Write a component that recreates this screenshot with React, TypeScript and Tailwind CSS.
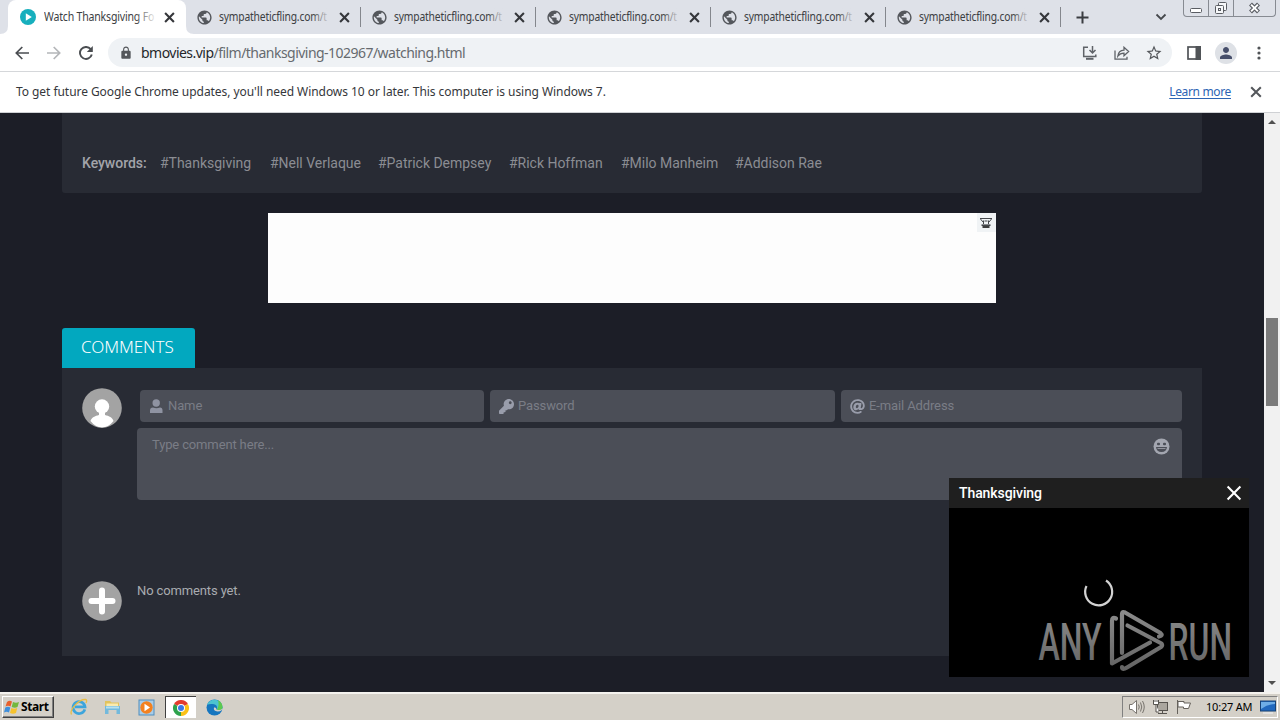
import React from "react";
import { FaKey, FaAt } from "react-icons/fa";
import { MdLock, MdStarBorder, MdPerson, MdPublic } from "react-icons/md";

const ui = "font-['Noto_Sans','DejaVu_Sans',sans-serif]";

function Cross({ size, color, width = 2 }: { size: number; color: string; width?: number }) {
  return (
    <svg width={size} height={size} viewBox="0 0 10 10" className="shrink-0">
      <path d="M1 1L9 9M9 1L1 9" stroke={color} strokeWidth={width} fill="none" />
    </svg>
  );
}

function SiteTab() {
  return (
    <div className="flex h-full w-[175px] shrink-0 items-center pl-[10px]">
      <MdPublic size={17} color="#54575c" className="shrink-0" />
      <div className="relative ml-[6px] w-[111px] whitespace-nowrap text-[12px] tracking-[-0.22px] text-[#3c4043]">
        <span className="block w-[111px] origin-left scale-x-[0.86]">sympatheticfling.com/t</span>
        <div className="absolute inset-y-0 right-0 w-[18px] bg-gradient-to-r from-transparent to-[#dee1e8]" />
      </div>
      <div className="ml-[9px] flex">
        <Cross size={11} color="#35373b" width={1.9} />
      </div>
      <div className="ml-auto h-[20px] w-px bg-[#84878d]" />
    </div>
  );
}

function TabStrip() {
  return (
    <div className="flex h-[34px] shrink-0 items-center bg-[#dee1e8] pl-[8px]">
      <div className="relative flex h-full w-[178px] shrink-0 items-center rounded-t-[8px] bg-white pl-[12px]">
        <svg width="8" height="8" viewBox="0 0 8 8" className="absolute -left-[8px] bottom-0">
          <path d="M8 0V8H0Q8 8 8 0Z" fill="#fff" />
        </svg>
        <svg width="8" height="8" viewBox="0 0 8 8" className="absolute -right-[8px] bottom-0">
          <path d="M0 0V8H8Q0 8 0 0Z" fill="#fff" />
        </svg>
        <svg width="16" height="16" viewBox="0 0 16 16" className="shrink-0">
          <circle cx="8" cy="8" r="8" fill="#17afbd" />
          <path d="M5.8 4.2L11.8 8L5.8 11.8Z" fill="#fff" />
        </svg>
        <div className="relative ml-[8px] w-[113px] whitespace-nowrap text-[12px] tracking-[-0.22px] text-[#3c4043]">
          <span className="block w-[113px] origin-left scale-x-[0.88]">Watch Thanksgiving Fo</span>
          <div className="absolute inset-y-0 right-0 w-[22px] bg-gradient-to-r from-transparent to-white" />
        </div>
        <div className="ml-[7px] flex">
          <Cross size={11} color="#35373b" width={1.9} />
        </div>
      </div>
      <SiteTab />
      <SiteTab />
      <SiteTab />
      <SiteTab />
      <SiteTab />
      <svg width="13" height="13" viewBox="0 0 13 13" className="ml-[15px] shrink-0">
        <path d="M6.5 0.5V12.5M0.5 6.5H12.5" stroke="#3a3d41" strokeWidth="2" />
      </svg>
      <svg width="12" height="8" viewBox="0 0 12 8" className="ml-[66px] shrink-0">
        <path d="M1.5 1.5L6 6L10.5 1.5" stroke="#45484c" strokeWidth="1.8" fill="none" />
      </svg>
      <div className="ml-[16px] flex h-[17px] w-[93px] shrink-0 self-start rounded-b-[4px] border border-t-0 border-[#878b92]">
        <div className="w-[25px] border-r border-[#878b92]">
          <svg width="24" height="16" viewBox="0 0 24 16">
            <rect x="6.5" y="8.500" width="11" height="4" rx="1" fill="#fff" stroke="#5a5d63" />
          </svg>
        </div>
        <div className="w-[25px] border-r border-[#878b92]">
          <svg width="24" height="16" viewBox="0 0 24 16" fill="#f6f7f9" stroke="#5a5d63">
            <rect x="9.500" y="2.500" width="8" height="8" rx="1" />
            <rect x="6.500" y="5.500" width="8" height="8" rx="1" />
            <rect x="9.500" y="8.500" width="2" height="2" />
          </svg>
        </div>
        <svg width="41" height="16" viewBox="0 0 41 16">
          <path d="M16.500 4L24.500 12M24.500 4L16.500 12" stroke="#5a5d63" strokeWidth="4.200" />
          <path d="M17.100 4.600L23.900 11.400M23.900 4.600L17.100 11.400" stroke="#fff" strokeWidth="2" />
        </svg>
      </div>
    </div>
  );
}

function Toolbar() {
  return (
    <div className="flex h-[38px] shrink-0 items-center border-b border-[#d5d7da] bg-white pl-[15px]">
      <svg width="14" height="14" viewBox="0 0 14 14">
        <path d="M14 7H1.500M7.300 1L1.300 7L7.300 13" stroke="#4a4d51" strokeWidth="1.700" fill="none" />
      </svg>
      <svg width="14" height="14" viewBox="0 0 14 14" className="ml-[18px]">
        <path d="M0 7H12.500M6.700 1L12.700 7L6.700 13" stroke="#b4b6b9" strokeWidth="1.700" fill="none" />
      </svg>
      <svg width="14" height="14" viewBox="0 0 14 14" className="ml-[18px]">
        <path d="M11.700 3.200A6 6 0 1 0 12.800 8.500" stroke="#4a4d51" strokeWidth="1.900" fill="none" />
        <path d="M13.800 0V6H7.800Z" fill="#4a4d51" />
      </svg>
      <div className="ml-[15px] flex h-[29px] w-[1064px] items-center rounded-full bg-[#eff2f5] pl-[11px] pr-[9px]">
        <MdLock size={14} color="#54575b" className="shrink-0" />
        <div className="ml-[8px] whitespace-nowrap text-[14px] tracking-[-0.53px] text-[#666a6f]">
          <span className="text-[#25272a]">bmovies.vip</span>/film/thanksgiving-102967/watching.html
        </div>
        <div className="ml-auto flex items-center">
          <svg width="16" height="14" viewBox="0 0 16 14" fill="none" stroke="#5f6368" strokeWidth="1.500">
            <path d="M6 1.200H1.700V10.500H13.800V8.500" />
            <path d="M4 12.800H11.500" strokeWidth="2" />
            <path d="M10.500 0V6.500M7.500 4L10.500 7L13.500 4" />
          </svg>
          <svg width="16" height="14" viewBox="0 0 16 14" fill="none" stroke="#5f6368" strokeWidth="1.300" className="ml-[16px]">
            <path d="M1 4.500V13.200H13V10.800" />
            <path d="M3.800 10.200C4.200 6.400 6.500 4.200 10 4.100V1.300L14.600 5.600L10 9.700V7.200C7.300 7.200 5.300 8.200 3.800 10.200Z" />
          </svg>
          <MdStarBorder size={18} color="#54575b" className="ml-[15px]" />
        </div>
      </div>
      <svg width="14" height="14" viewBox="0 0 14 14" className="ml-[15px]">
        <rect x="1" y="1" width="12" height="12" fill="#fff" stroke="#505357" strokeWidth="1.700" />
        <rect x="8.500" y="0" width="5.500" height="14" fill="#505357" />
      </svg>
      <div className="ml-[14px] flex h-[22px] w-[22px] items-center justify-center rounded-full bg-[#dee1e6]">
        <MdPerson size={18} color="#474f6b" />
      </div>
      <svg width="4" height="14" viewBox="0 0 4 14" fill="#505357" className="ml-[20px]">
        <circle cx="2" cy="2" r="1.600" />
        <circle cx="2" cy="7" r="1.600" />
        <circle cx="2" cy="12" r="1.600" />
      </svg>
    </div>
  );
}

function InfoBar() {
  return (
    <div className="flex h-[41px] shrink-0 items-center whitespace-nowrap border-b border-[#cfd1d4] bg-white pl-[16px] pr-[18px] text-[12px] text-[#35373b]">
      <span className="tracking-[-0.055px]">
        To get future Google Chrome updates, you'll need Windows 10 or later. This computer is using Windows 7.
      </span>
      <span className="ml-auto tracking-[-0.35px] text-[#2d64b4] underline underline-offset-2">Learn more</span>
      <div className="ml-[19px] flex">
        <Cross size={12} color="#54575b" width={1.700} />
      </div>
    </div>
  );
}

const keywords: [string, string][] = [
  ["#Thanksgiving", "w-[110px]"],
  ["#Nell Verlaque", "w-[108px]"],
  ["#Patrick Dempsey", "w-[131px]"],
  ["#Rick Hoffman", "w-[112px]"],
  ["#Milo Manheim", "w-[114px]"],
  ["#Addison Rae", "w-[110px]"],
];

function Field({ icon, label, className }: { icon: React.ReactNode; label: string; className: string }) {
  return (
    <div className={`flex h-[32px] items-center rounded-[4px] bg-[#4b4e57] pl-[9px] text-[13px] tracking-[-0.12px] text-[#7a7d86] ${className}`}>
      {icon}
      <span className="ml-[4px]">{label}</span>
    </div>
  );
}

function Comments() {
  return (
    <div className="h-[288px] bg-[#282b34] pl-[20px] pr-[20px] pt-[20px]">
      <div className="flex">
        <svg width="40" height="40" viewBox="0 0 40 40" className="shrink-0">
          <circle cx="20" cy="20" r="19.800" fill="#a3a3a3" />
          <circle cx="20" cy="18.500" r="7.200" fill="#fff" />
          <path d="M17 24H23V27C27 28 30.500 29.500 31.500 33Q26.500 39.500 20 39.500Q13.500 39.500 8.500 33C9.500 29.500 13 28 17 27Z" fill="#fff" />
        </svg>
        <div className="ml-[15px] flex-1 pt-[2px]">
          <div className="flex gap-[6px] pl-[3px]">
            <Field
              className="w-[344px]"
              label="Name"
              icon={
                <svg width="15" height="15" viewBox="0 0 15 15" fill="#8f93a2">
                  <circle cx="7.200" cy="4" r="3.700" />
                  <path d="M1 14V11.500Q1 8.500 4 8.500Q7.500 10 11 8.500Q13.500 8.500 13.500 11.500V14Z" />
                </svg>
              }
            />
            <Field className="w-[345px]" label="Password" icon={<FaKey size={15} color="#999dab" />} />
            <Field className="flex-1" label="E-mail Address" icon={<FaAt size={15} color="#999dab" />} />
          </div>
          <div className="mt-[6px] flex h-[72px] justify-between rounded-[4px] bg-[#4b4e57] pl-[15px] pr-[12px] pt-[7px] text-[13px] text-[#7a7d86]">
            <span className="tracking-[-0.14px]">Type comment here...</span>
            <svg width="17" height="17" viewBox="0 0 17 17" className="mt-[3px]">
              <circle cx="8.500" cy="8.500" r="8" fill="#a3a6b0" />
              <rect x="4" y="4.700" width="3" height="2.600" rx="1" fill="#4b4e57" />
              <rect x="10" y="4.700" width="3" height="2.600" rx="1" fill="#4b4e57" />
              <path d="M3 9H14Q13.500 14 8.500 14Q3.500 14 3 9Z" fill="#4b4e57" />
              <path d="M4.500 10.200H12.500V11H4.500Z" fill="#a3a6b0" />
            </svg>
          </div>
        </div>
      </div>
      <div className="mt-[81px] flex">
        <svg width="40" height="40" viewBox="0 0 40 40" className="shrink-0">
          <circle cx="20" cy="20" r="19.800" fill="#a3a3a3" />
          <path d="M20 9.500V30.500M9.500 20H30.500" stroke="#fff" strokeWidth="6" strokeLinecap="round" />
        </svg>
        <span className="ml-[15px] text-[13px] leading-[20px] tracking-[-0.13px] text-[#a9abb0]">No comments yet.</span>
      </div>
    </div>
  );
}

function FloatingPlayer() {
  return (
    <div className="absolute left-[949px] top-[365px] flex h-[199px] w-[300px] flex-col bg-black">
      <div className="flex h-[30px] items-center justify-between bg-[#1f1f1f] pl-[10px] pr-[7px] text-[14px] font-medium tracking-[-0.08px] text-white">
        <span>Thanksgiving</span>
        <Cross size={16} color="#fff" width={1.300} />
      </div>
      <svg width="300" height="169" viewBox="949 508 300 169">
        <defs>
          <linearGradient id="fade" x1="0" y1="610" x2="0" y2="672" gradientUnits="userSpaceOnUse">
            <stop offset="0" stopColor="#8c8c8c" />
            <stop offset="1" stopColor="#626262" />
          </linearGradient>
        </defs>
        <path d="M1086.500 586A13.500 13.500 0 1 0 1106 580.500" stroke="#d2d2d2" strokeWidth="2.200" fill="none" />
        <g fill="url(#fade)" fontFamily="Roboto, sans-serif" fontSize="52" fontWeight="500">
          <text x="1038.500" y="659.500" textLength="63" lengthAdjust="spacingAndGlyphs">ANY</text>
          <text x="1168.500" y="659.500" textLength="63.500" lengthAdjust="spacingAndGlyphs">RUN</text>
        </g>
        <g fill="none" stroke="url(#fade)" strokeWidth="4.200" strokeLinecap="round" strokeLinejoin="round">
          <path d="M1116 618.500Q1112 616.500 1112 621V663.500L1150 642.500" />
          <path d="M1122 653V614Q1122 611 1125 612.500L1160.500 633Q1163.500 635.500 1159 636.500" />
          <path d="M1127.500 625.500L1161.500 643.500Q1163 645.500 1161 647L1127 667.500Q1122 670.500 1122 667" />
        </g>
      </svg>
    </div>
  );
}

function Page() {
  return (
    <div className="relative flex h-[579px] shrink-0 bg-[#1c1e27] font-[Roboto,sans-serif]">
      <div className="w-[1264px] px-[62px]">
        <div className="flex h-[80px] rounded-b-[3px] bg-[#282b34] pl-[20px] pt-[40px] text-[14px] leading-[20px] tracking-[-0.02px] text-[#8b8d93]">
          <span className="w-[78px] font-medium text-[#a2a4aa]">Keywords:</span>
          {keywords.map(([word, width]) => (
            <span key={word} className={`whitespace-nowrap ${width}`}>{word}</span>
          ))}
        </div>
        <div className="mx-auto mt-[20px] flex h-[90px] w-[728px] justify-end bg-[#fdfdfd]">
          <div className="flex h-[19px] w-[19px] items-center justify-center bg-[#f0f3f5] pr-[2px]">
            <svg width="12" height="10" viewBox="0 0 12 10" fill="none" stroke="#45484c">
              <path d="M0 0.500H12M0.500 1L3 4M11.500 1L9 4M3.500 2.500V6M8.500 2.500V6M4.500 3H7.500" />
              <path d="M1.500 7.200H10.500" strokeWidth="1.600" />
              <path d="M2.500 9H9.500" stroke="#111" strokeWidth="1.600" />
            </svg>
          </div>
        </div>
        <div className="mt-[25px] flex h-[40px] w-[133px] items-center rounded-t-[3px] bg-[#02a8bf] pb-[2px] pl-[19px] font-['Noto_Sans',sans-serif] text-[17px] font-light tracking-[-0.05px] text-white">
          COMMENTS
        </div>
        <Comments />
      </div>
      <div className="flex w-[16px] flex-col items-center bg-[#f1f1f1] pt-[7px]">
        <svg width="8" height="4" viewBox="0 0 8 4" className="shrink-0"><path d="M0 4L4 0L8 4Z" fill="#505050" /></svg>
        <div className="mt-[194px] h-[88px] w-[12px] shrink-0 bg-[#7b7b7b]" />
        <svg width="8" height="4" viewBox="0 0 8 4" className="mt-[275px] shrink-0"><path d="M0 0L4 4L8 0Z" fill="#505050" /></svg>
      </div>
      <FloatingPlayer />
    </div>
  );
}

function Taskbar() {
  return (
    <div className="flex h-[28px] shrink-0 items-center border-t-2 border-[#f4f2ee] bg-[#d4d0c8] pl-[2px] pr-[2px]">
      <div className="flex h-[22px] w-[52px] items-center border border-b-[#404040] border-l-white border-r-[#404040] border-t-white pl-px shadow-[inset_-1px_-1px_0_#808080]">
        <svg width="16" height="15" viewBox="0 0 16 15">
          <path d="M3 2Q5.500 0 8 1.500L6.500 6.500Q4 5 1.500 6.500Z" fill="#e8602c" />
          <path d="M9 2Q12 3.500 15 2L13.500 7Q11 8.500 7.700 7Z" fill="#74b83c" />
          <path d="M1.300 7.500Q4 6 6.300 7.500L5 12.500Q2.500 11 0 12.500Z" fill="#3f8fdc" />
          <path d="M7.400 8Q10 9.500 13.200 8L12 13Q9 14.500 6 13Z" fill="#f6c22c" />
        </svg>
        <span className="ml-[1px] text-[12px] font-bold tracking-[-0.4px] text-black">Start</span>
      </div>
      <svg width="18" height="18" viewBox="0 0 18 18" className="ml-[16px]">
        <path d="M14.800 11.300A6 6 0 1 1 15 8.800H5" stroke="#3da5dc" strokeWidth="2.700" fill="none" />
        <path d="M1.500 16.500C-1 12 9 1 15.500 1.500Q17.500 2 16 5" stroke="#e8bd45" strokeWidth="1.300" fill="none" />
      </svg>
      <svg width="17" height="17" viewBox="0 0 17 17" className="ml-[16px]">
        <path d="M1 2H6L7.500 3.500H15V9H1Z" fill="#e2c35c" />
        <path d="M2.500 4.500H14V9H2.500Z" fill="#faeab0" />
        <path d="M1 7H16V15H12.500V11H4.500V15H1Z" fill="#73b9dc" />
        <path d="M2 7.500H15V9.500H2Z" fill="#b6e0ef" />
      </svg>
      <svg width="17" height="17" viewBox="0 0 17 17" className="ml-[17px]">
        <rect x="1" y="1" width="15" height="15" fill="#a9cde8" stroke="#4f8dbd" />
        <circle cx="8.500" cy="8.500" r="6.200" fill="#f3811f" />
        <path d="M6.500 4.800L12 8.500L6.500 12.200Z" fill="#fff" />
      </svg>
      <div className="ml-[10px] flex h-[22px] w-[31px] items-center justify-center border-l border-t border-[#404040] bg-white">
        <svg width="16" height="16" viewBox="0 0 16 16">
          <path d="M8 8L1.070 4A8 8 0 0 1 14.930 4Z" fill="#e33b2e" />
          <path d="M8 8L14.930 4A8 8 0 0 1 8 16Z" fill="#fbc116" />
          <path d="M8 8L8 16A8 8 0 0 1 1.070 4Z" fill="#2da24c" />
          <circle cx="8" cy="8" r="4" fill="#fff" />
          <circle cx="8" cy="8" r="3" fill="#3b78e7" />
        </svg>
      </div>
      <svg width="17" height="17" viewBox="0 0 17 17" className="ml-[10px]">
        <circle cx="8.500" cy="8.500" r="8" fill="#1676bf" />
        <path d="M1 6A8 8 0 0 1 16.500 8.500Q16 12 11 11Q12 5.500 7 5Q3 4.500 1 6Z" fill="#4cc3d0" />
        <path d="M12 1.300A8 8 0 0 1 16.500 8.500Q16 12 11 11Q13.500 6 12 1.300Z" fill="#5dc94f" />
        <path d="M8 8.500Q7 12 11.500 12.500Q14 12.500 16 11L16.500 9.500Q14 12 10.500 10.500Q10.500 8 8 8.500Z" fill="#d4d0c8" />
      </svg>
      <div className="ml-auto flex h-[22px] w-[156px] items-center border border-b-white border-l-[#808080] border-r-white border-t-[#808080] pl-[5px] pr-px">
        <svg width="18" height="16" viewBox="0 0 18 16" stroke="#77736d">
          <path d="M1.500 5.500H4L8.500 1.500V14.500L4 10.500H1.500Z" fill="#fff" />
          <path d="M10.500 5.500Q12 8 10.500 10.500M12.500 3.500Q15 8 12.500 12.500M14.500 2Q18 8 14.500 14" fill="none" />
        </svg>
        <svg width="17" height="16" viewBox="0 0 17 16" className="ml-[6px]" fill="#fff" stroke="#56534e">
          <rect x="5.500" y="3.500" width="10" height="8" fill="#aaa69e" />
          <path d="M6 14.500H15M10.500 11.500V14" />
          <path d="M1.500 1V5.500H6.500V1M3 1V3M5 1V3M4 5.500V13H7" />
        </svg>
        <svg width="16" height="16" viewBox="0 0 16 16" className="ml-[7px]" fill="#fff" stroke="#66625c">
          <path d="M1.500 1V15M2 2.500H8V4H14.500L12.500 9.500H7.500V8H2Z" />
        </svg>
        <span className="ml-[14px] whitespace-nowrap text-[11px] tracking-[-0.2px] text-black">10:27 AM</span>
        <svg width="16" height="14" viewBox="0 0 16 14" className="ml-auto">
          <rect x="0.500" y="1" width="15" height="10" fill="#2168bd" stroke="#174276" />
          <path d="M1 2H15V4Q8 4 1 9Z" fill="#6eade6" />
          <path d="M3 13H13" stroke="#e7e7e7" strokeWidth="1.500" />
        </svg>
      </div>
    </div>
  );
}

export default function App() {
  return (
    <div className={`flex h-[720px] w-[1280px] flex-col overflow-hidden bg-white ${ui}`}>
      <TabStrip />
      <Toolbar />
      <InfoBar />
      <Page />
      <Taskbar />
    </div>
  );
}
